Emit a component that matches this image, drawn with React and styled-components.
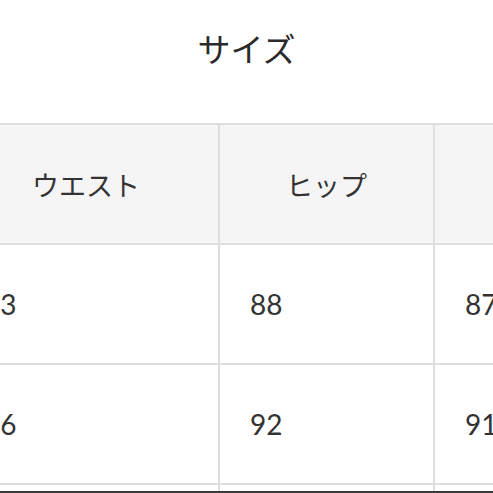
import styled, { createGlobalStyle } from 'styled-components';

const rows = [
    ["63", "88", "87"],
    ["66", "92", "91"],
    ["", "", ""],
];

export default function App() {
    return (
        <Page>
            <GlobalStyle />
            <Title>サイズ</Title>
            <SizeTable>
                <HeaderCell>ウエスト</HeaderCell>
                <HeaderCell>ヒップ</HeaderCell>
                <HeaderCell>着丈</HeaderCell>
                {rows.map((row, i) =>
                    row.map((value, j) => <Cell key={`${i}-${j}`}>{value}</Cell>)
                )}
            </SizeTable>
            <BottomEdge />
        </Page>
    )
}

const GlobalStyle = createGlobalStyle`
    html, body {
        margin: 0;
        padding: 0;
        background: #FFFFFF;
        overflow: hidden;
    }

    body {
        width: 493px;
        height: 493px;
    }
`;

const Page = styled.div`
    width: 493px;
    height: 493px;
    overflow: hidden;
    display: flex;
    flex-direction: column;
    align-items: flex-start;
`;

const Title = styled.h1`
    width: 100%;
    height: 123px;
    margin: 0;
    padding-top: 28px;
    box-sizing: border-box;
    flex-shrink: 0;
    font-family: "Noto Sans CJK JP", "Noto Sans", sans-serif;
    font-size: 33px;
    font-weight: 400;
    line-height: 40px;
    color: #2A2A2A;
    text-align: center;
`;

const SizeTable = styled.div`
    margin-left: -48px;
    padding: 2px;
    background: #DEDEDE;
    display: grid;
    grid-template-columns: 264px 213px 213px;
    grid-auto-rows: 118px;
    gap: 2px;
    flex-shrink: 0;
`;

const HeaderCell = styled.div`
    background: #F5F5F5;
    display: flex;
    justify-content: center;
    align-items: center;
    font-family: "Noto Sans CJK JP", "Noto Sans", sans-serif;
    font-size: 27px;
    color: #333333;
`;

const Cell = styled.div`
    background: #FFFFFF;
    padding-left: 30px;
    display: flex;
    align-items: center;
    font-family: Lato, "Noto Sans", sans-serif;
    font-size: 28px;
    color: #333333;
`;

const BottomEdge = styled.div`
    width: 493px;
    height: 2px;
    background: #3A3A3A;
    position: fixed;
    left: 0;
    bottom: 0;
`;
